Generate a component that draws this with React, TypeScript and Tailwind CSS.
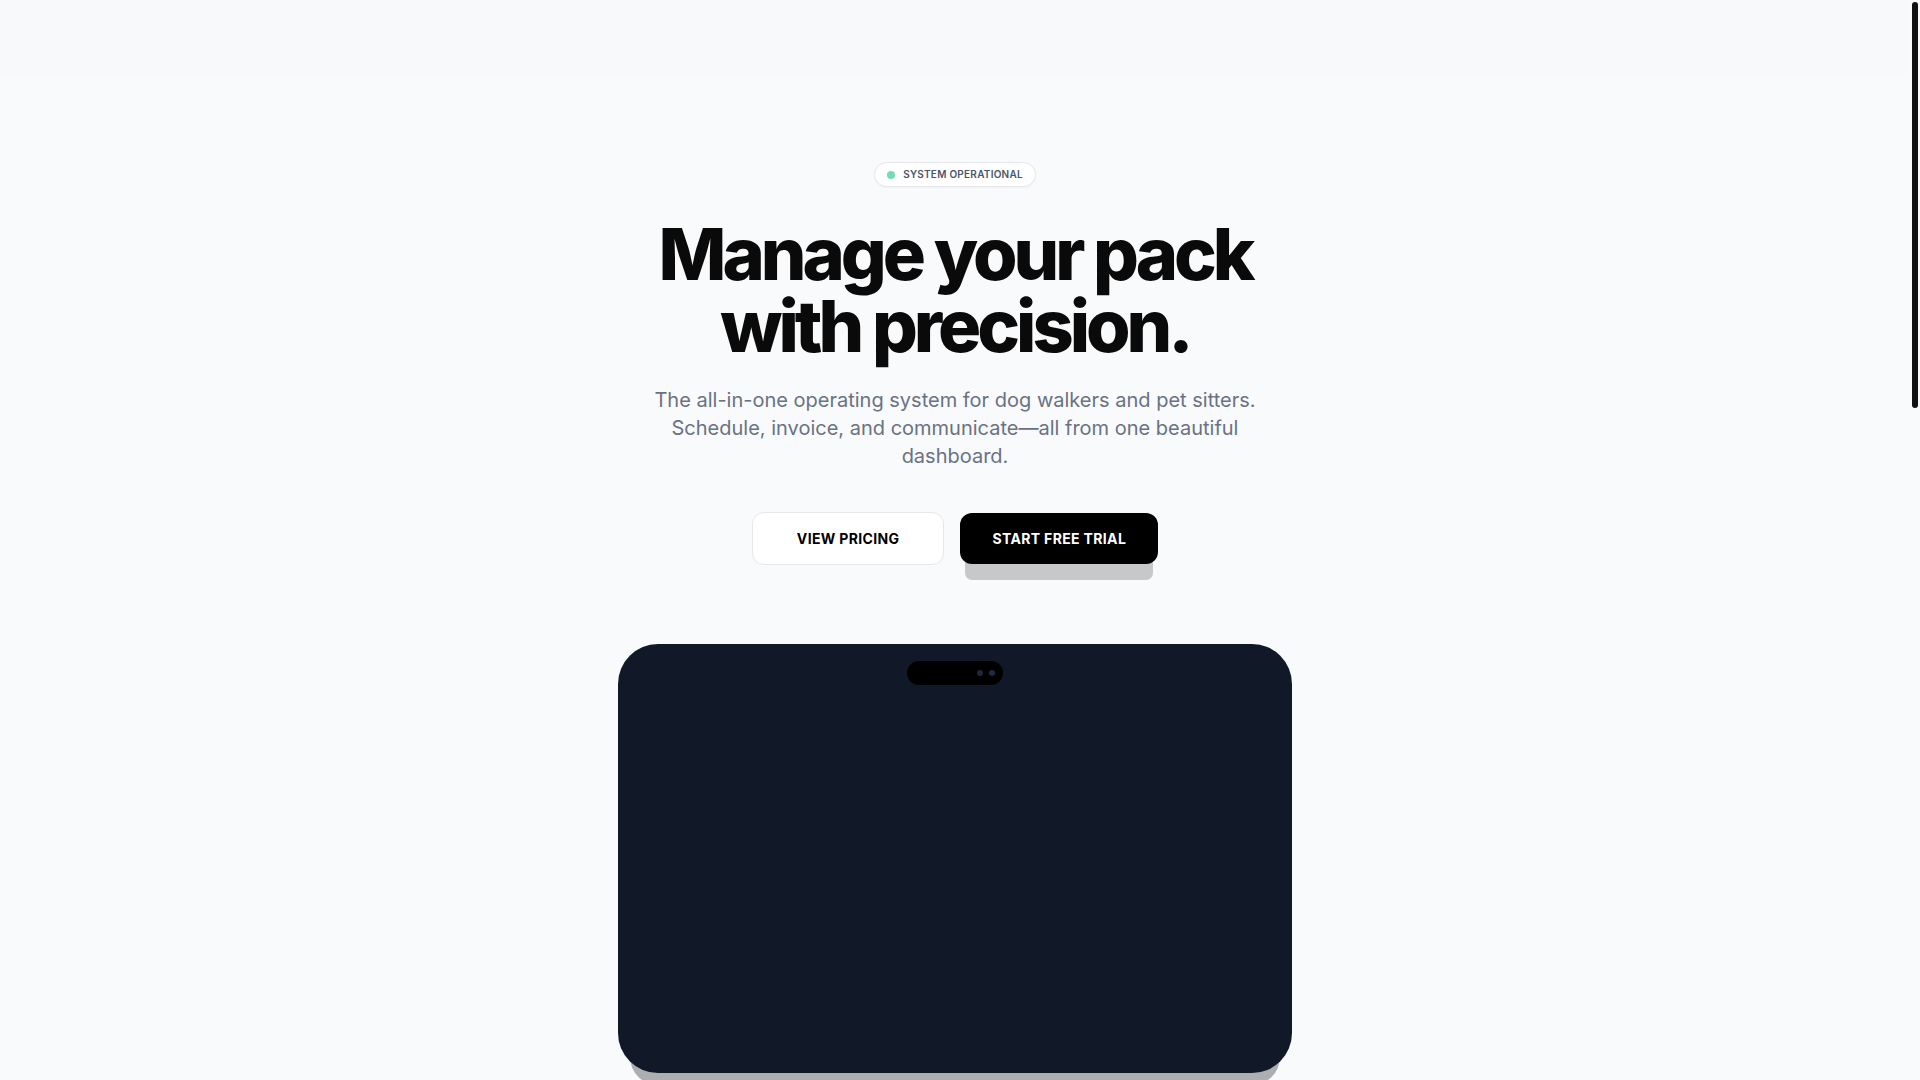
import type { ReactNode } from "react";

function StatusBadge({ children }: { children: ReactNode }) {
  return (
    <div className="inline-flex h-[25px] items-center gap-2 rounded-full border border-gray-200 bg-white px-3 shadow-[0_1px_2px_rgba(0,0,0,0.04)]">
      <span className="inline-block h-2 w-2 rounded-full bg-[#74dcb3]" />
      <span className="text-[10px] font-semibold uppercase tracking-wide text-gray-600">{children}</span>
    </div>
  );
}

function DeviceMockup() {
  return (
    <div className="mx-auto h-[429px] w-[674px] rounded-[40px] bg-[#111827] shadow-[0_24px_0_-12px_rgba(0,0,0,0.3)]">
      <div className="flex justify-center pt-[17px]">
        <div className="flex h-6 w-24 items-center justify-end gap-1.5 rounded-full bg-black pr-2">
          <span className="h-1.5 w-1.5 rounded-full bg-[#1f2937]" />
          <span className="h-1.5 w-1.5 rounded-full bg-[#1e2a47]" />
        </div>
      </div>
    </div>
  );
}

// page scrollbar as drawn in the shot (headless hides the native one)
function ScrollRail() {
  return (
    <div className="flex w-[10px] shrink-0 justify-center bg-[#f8fafc] pt-[2px]">
      <div className="h-[406px] w-[6px] rounded-full bg-[#111111]" />
    </div>
  );
}

export default function App() {
  return (
    <div className="flex h-screen overflow-hidden bg-[#f8fafc] text-gray-900 [font-family:Inter,'Noto_Sans',sans-serif]">
      <main className="min-w-0 flex-1 overflow-hidden">
        <header className="h-[78px] bg-[#f7f9fb]" />

        <section className="flex flex-col items-center px-6 pt-[84px] text-center">
          <StatusBadge>System Operational</StatusBadge>

          <h1 className="mt-[31px] text-[72px] font-extrabold leading-none tracking-[-0.056em] text-[#0a0a0a]">
            Manage your pack
            <br />
            with precision.
          </h1>

          <p className="mt-[24px] max-w-2xl text-xl text-gray-500">
            The all-in-one operating system for dog walkers and pet sitters. Schedule, invoice, and
            communicate—all from one beautiful dashboard.
          </p>

          <div className="mt-[42px] flex items-center gap-4">
            <button className="h-[53px] rounded-xl border border-gray-200 bg-white px-[44px] text-sm font-bold tracking-wide text-black">
              VIEW PRICING
            </button>
            <button className="h-[51px] rounded-xl bg-black px-8 text-sm font-bold tracking-wide text-white shadow-[0_21px_0_-5px_rgba(0,0,0,0.2)]">
              START FREE TRIAL
            </button>
          </div>

          <div className="mt-[79px] w-full pb-10">
            <DeviceMockup />
          </div>
        </section>
      </main>
      <ScrollRail />
    </div>
  );
}
